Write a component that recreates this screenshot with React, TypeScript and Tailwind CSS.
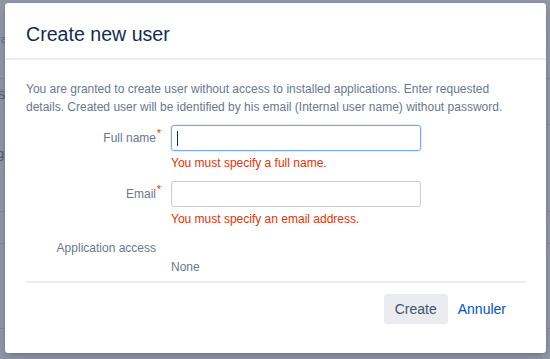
import React from "react";

const font = { fontFamily: '"Liberation Sans", Arial, sans-serif' };

function Backdrop() {
  return (
    <div className="flex flex-col w-full h-full">
      <div className="h-[35px]" />
      <div className="h-[8px] text-[11px] leading-[8px] text-[#4f66a6] pl-0 -ml-[3px]">ra</div>
      <div className="h-[35px]" />
      <div className="h-px bg-[#7f8898]" />
      <div className="h-[10px]" />
      <div className="h-px w-[10px] bg-[#7f8898]" />
      <div className="h-[6px] text-[11px] leading-[10px] text-[#4e5868] -ml-[2px]">S</div>
      <div className="h-[28px]" />
      <div className="h-px bg-[#7f8898] self-end w-[10px]" />
      <div className="h-[22px]" />
      <div className="h-[13px] text-[13px] leading-[13px] text-[#4e5868] -ml-[3px]">g</div>
      <div className="h-[51px]" />
      <div className="h-px bg-[#7f8898]" />
      <div className="h-[31px]" />
      <div className="h-px bg-[#7f8898]" />
      <div className="h-[84px]" />
      <div className="h-px bg-[#7f8898]" />
    </div>
  );
}

function Caret() {
  return <div className="w-px h-[15px] bg-[#172b4d] ml-[5px]" />;
}

export default function App() {
  return (
    <div className="relative w-[550px] h-[359px] overflow-hidden bg-[#8f97a5]" style={font}>
      <Backdrop />
      <div className="absolute left-[5px] top-[3px] w-[541px] h-[350px] bg-white rounded-[3px] shadow-[0_0_1px_rgba(9,30,66,0.4),0_4px_8px_-2px_rgba(9,30,66,0.3)] flex flex-col">
        <div className="h-[55px] pl-[21px] pt-[19px] text-[19.6px] leading-[24px] text-[#172b4d]">
          Create new user
        </div>
        <div className="h-[2px] bg-[#ebecf0]" />
        <div className="pl-[21px] pr-[20px] pt-[20px] flex flex-col">
          <p className="text-[12px] leading-[18px] text-[#6b778c]">
            You are granted to create user without access to installed applications. Enter requested details. Created user will be identified by his email (Internal user name) without password.
          </p>
          <div className="mt-[9px] flex">
            <div className="w-[130px] h-[26px] flex items-center justify-end text-[12px] text-[#6b778c] relative">
              Full name
              <span className="absolute -right-[5px] top-[3px] text-[#de350b] text-[11px] leading-[11px]">*</span>
            </div>
            <div className="ml-[15px] flex flex-col">
              <div className="w-[250px] h-[26px] rounded-[3px] border border-[#7ea5f3] shadow-[0_0_0_0.5px_rgba(76,154,255,0.35)] flex items-center">
                <Caret />
              </div>
              <div className="mt-[3px] text-[12px] leading-[18px] text-[#de350b]">You must specify a full name.</div>
            </div>
          </div>
          <div className="mt-[9px] flex">
            <div className="w-[130px] h-[26px] flex items-center justify-end text-[12px] text-[#6b778c] relative">
              Email
              <span className="absolute -right-[5px] top-[3px] text-[#de350b] text-[11px] leading-[11px]">*</span>
            </div>
            <div className="ml-[15px] flex flex-col">
              <div className="w-[250px] h-[26px] rounded-[3px] border border-[#c8ccd4]" />
              <div className="mt-[3px] text-[12px] leading-[18px] text-[#de350b]">You must specify an email address.</div>
            </div>
          </div>
          <div className="mt-[11px] flex">
            <div className="w-[130px] text-right text-[12px] leading-[18px] text-[#6b778c]">Application access</div>
          </div>
          <div className="pl-[145px] text-[12px] leading-[18px] text-[#6b778c] mt-[1px]">None</div>
          <div className="mt-[5px] h-[2px] bg-[#ebecf0]" />
          <div className="mt-[11px] flex justify-end pr-[10px]">
            <button className="h-[30px] px-[11px] rounded-[3px] bg-[#ebecf0] text-[14px] text-[#42526e]">Create</button>
            <button className="h-[30px] px-[10px] text-[14px] text-[#0052cc]">Annuler</button>
          </div>
        </div>
      </div>
    </div>
  );
}
